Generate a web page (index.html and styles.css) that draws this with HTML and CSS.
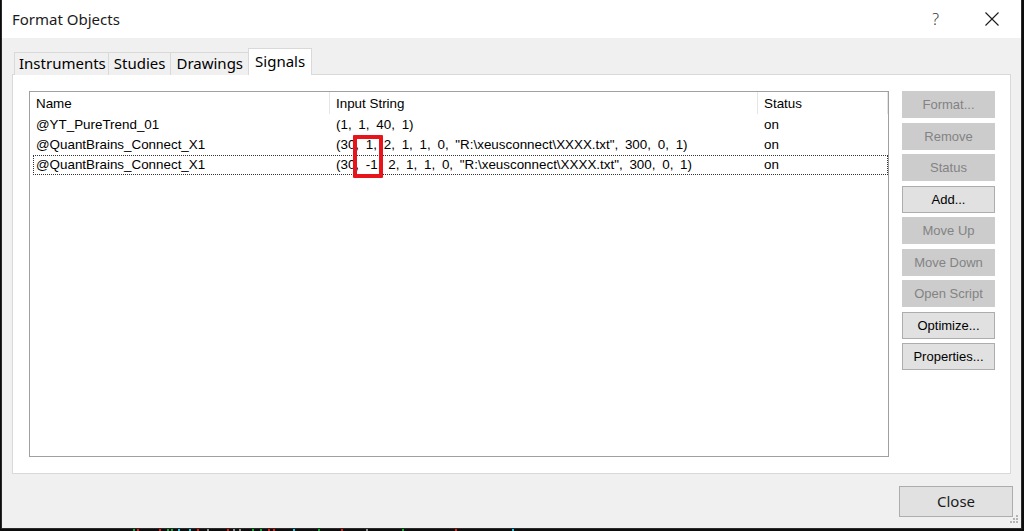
FILE: index.html
```html
<!DOCTYPE html>
<html lang="en">
<head>
<meta charset="utf-8">
<title>Format Objects</title>
<link rel="stylesheet" href="styles.css">
</head>
<body>
<div class="desk">
  <div class="dialog">
    <div class="titlebar">
      <span class="title">Format Objects</span>
      <div class="title-actions">
        <span class="help">?</span>
        <svg class="close-x" width="14" height="14" viewBox="0 0 14 14"><path d="M0.5 0.5 L13.5 13.5 M13.5 0.5 L0.5 13.5" stroke="#1a1a1a" stroke-width="1.1" fill="none"/></svg>
      </div>
    </div>
    <div class="main">
      <div class="tabs">
        <div class="tab first">Instruments</div>
        <div class="tab">Studies</div>
        <div class="tab">Drawings</div>
        <div class="tab active">Signals</div>
      </div>
      <div class="panel">
        <div class="list">
          <div class="list-head">
            <div class="hcell">Name</div>
            <div class="hcell">Input String</div>
            <div class="hcell">Status</div>
          </div>
          <div class="row">
            <div class="cell">@YT_PureTrend_01</div>
            <div class="cell args">(1,  1,  40,  1)</div>
            <div class="cell">on</div>
          </div>
          <div class="row">
            <div class="cell">@QuantBrains_Connect_X1</div>
            <div class="cell args">(30,  1,  2,  1,  1,  0,  "R:\xeusconnect\XXXX.txt",  300,  0,  1)</div>
            <div class="cell">on</div>
          </div>
          <div class="row focused">
            <div class="cell">@QuantBrains_Connect_X1</div>
            <div class="cell args">(30,  -1,  2,  1,  1,  0,  "R:\xeusconnect\XXXX.txt",  300,  0,  1)</div>
            <div class="cell">on</div>
          </div>
          <div class="mark"></div>
        </div>
        <div class="actions">
          <button class="btn" disabled>Format...</button>
          <button class="btn" disabled>Remove</button>
          <button class="btn" disabled>Status</button>
          <button class="btn">Add...</button>
          <button class="btn" disabled>Move Up</button>
          <button class="btn" disabled>Move Down</button>
          <button class="btn" disabled>Open Script</button>
          <button class="btn">Optimize...</button>
          <button class="btn">Properties...</button>
        </div>
      </div>
    </div>
    <div class="footer">
      <button class="close-btn">Close</button>
    </div>
    <svg class="grip" width="11" height="11" viewBox="0 0 11 11">
      <g fill="#b4b4b4">
        <rect x="8" y="0" width="2" height="2"/>
        <rect x="5" y="3" width="2" height="2"/><rect x="8" y="3" width="2" height="2"/>
        <rect x="2" y="6" width="2" height="2"/><rect x="5" y="6" width="2" height="2"/><rect x="8" y="6" width="2" height="2"/>
      </g>
    </svg>
  </div>
  <div class="chart-strip">
    <span class="tick up" style="left:133px"></span>
    <span class="tick dn" style="left:137px"></span>
    <span class="tick dn" style="left:159px"></span>
    <span class="tick up" style="left:167px"></span>
    <span class="tick up" style="left:171px"></span>
    <span class="tick cy" style="left:178px"></span>
    <span class="tick cy" style="left:189px"></span>
    <span class="tick dn" style="left:197px"></span>
    <span class="tick gr" style="left:207px"></span>
    <span class="tick dn" style="left:227px"></span>
    <span class="tick gr" style="left:233px"></span>
    <span class="tick gr" style="left:239px"></span>
    <span class="tick up" style="left:252px"></span>
    <span class="tick up" style="left:260px"></span>
    <span class="tick dn" style="left:268px"></span>
    <span class="tick dn" style="left:273px"></span>
    <span class="tick cy" style="left:293px"></span>
    <span class="tick up" style="left:318px"></span>
    <span class="tick dn" style="left:341px"></span>
    <span class="tick gr" style="left:366px"></span>
    <span class="tick up" style="left:402px"></span>
    <span class="tick dn" style="left:455px"></span>
    <span class="tick cy" style="left:512px"></span>
  </div>
</div>
</body>
</html>
```
FILE: styles.css
```css
* { box-sizing: border-box; }

html, body {
  margin: 0;
  padding: 0;
  width: 1024px;
  height: 531px;
  overflow: hidden;
  background: #0c0c0c;
}

.desk {
  position: relative;
  width: 1024px;
  height: 531px;
  padding-left: 1px;
}

.dialog {
  position: relative;
  width: 1021px;
  height: 529px;
  border: 1px solid #2a2a2a;
  border-top: none;
  background: #f0f0f0;
  display: flex;
  flex-direction: column;
  font-family: "Noto Sans", "Liberation Sans", sans-serif;
  color: #000;
}

/* Title bar */
.titlebar {
  height: 38px;
  flex: none;
  background: #fff;
  display: flex;
  align-items: center;
  justify-content: space-between;
  padding: 0 22px 0 10px;
}
.title {
  font-size: 15px;
  color: #1b1b1b;
  margin-top: -1px;
}
.title-actions {
  display: flex;
  align-items: center;
  gap: 46px;
  margin-top: -1px;
}
.help {
  font-size: 16px;
  font-weight: 300;
  color: #333;
}
.close-x { display: block; }

/* Tabs + panel */
.main {
  padding: 11px 10px 0 10px;
  flex: none;
}
.tabs {
  display: flex;
  align-items: flex-end;
  height: 25px;
  padding-left: 2px;
  position: relative;
  z-index: 1;
}
.tab {
  height: 23px;
  margin-bottom: -1px;
  border: 1px solid #d9d9d9;
  border-bottom: none;
  margin-left: -1px;
  background: #f0f0f0;
  font-size: 15px;
  line-height: 20px;
  padding: 0 5px 0 5px;
  color: #000;
  white-space: nowrap;
}
.tab.first {
  margin-left: 0;
  padding: 0 2px 0 4px;
}
.tab.active {
  height: 27px;
  background: #fff;
  padding: 0 6px 0 6px;
  line-height: 24px;
  margin-left: -1px;
}

.panel {
  height: 400px;
  border: 1px solid #d9d9d9;
  background: #fff;
  display: flex;
  align-items: flex-start;
  padding: 16px 15px 16px 16px;
  gap: 13px;
}

/* List view */
.list {
  position: relative;
  width: 860px;
  height: 366px;
  border: 1px solid #a0a0a0;
  background: #fff;
  font-family: "Liberation Sans", Arial, sans-serif;
  font-size: 13.4px;
  color: #000;
  flex: none;
}
.list-head,
.row {
  display: grid;
  grid-template-columns: 300px 428px 1fr;
}
.list-head { height: 23px; }
.hcell {
  padding-left: 6px;
  line-height: 23px;
  border-right: 1px solid #e5e5e5;
  height: 22px;
}
.row {
  position: relative;
  height: 20px;
}
.cell {
  padding-left: 6px;
  line-height: 20px;
  white-space: pre;
  overflow: hidden;
}
.cell.args { word-spacing: -0.35px; }
.row.focused::after {
  content: "";
  position: absolute;
  left: 3px;
  right: 0;
  top: 0;
  bottom: 0;
  border: 1px dotted #333;
}

/* Highlight box drawn over the changed parameter */
.mark {
  position: absolute;
  left: 323px;
  top: 43px;
  width: 30px;
  height: 43px;
  border: 4px solid #e8141c;
  border-radius: 1px;
}

/* Side buttons */
.actions {
  display: flex;
  flex-direction: column;
  gap: 4.5px;
  width: 93px;
  flex: none;
}
.btn {
  height: 27px;
  width: 93px;
  margin: 0;
  padding: 0;
  font-family: "Liberation Sans", Arial, sans-serif;
  font-size: 13px;
  color: #000;
  background: #e1e1e1;
  border: 1px solid #adadad;
  border-radius: 0;
}
.btn:disabled {
  background: #cccccc;
  border-color: #cccccc;
  color: #838383;
}

/* Footer */
.footer {
  display: flex;
  justify-content: flex-end;
  padding: 12px 8px 0 0;
}
.close-btn {
  width: 114px;
  height: 31px;
  margin: 0;
  padding: 0 0 2px 0;
  font-family: "Noto Sans", "Liberation Sans", sans-serif;
  font-size: 15px;
  color: #1b1b1b;
  background: #e1e1e1;
  border: 1px solid #adadad;
  border-radius: 0;
}

.grip {
  position: absolute;
  right: 2px;
  bottom: 2px;
}

/* Chart visible behind the dialog */
.chart-strip {
  position: absolute;
  left: 0;
  right: 0;
  bottom: 0;
  height: 2px;
}
.tick {
  position: absolute;
  bottom: 0;
  width: 2px;
  height: 2px;
}
.tick.up { background: #11a83a; }
.tick.dn { background: #e41a1a; }
.tick.cy { background: #22c8d8; }
.tick.gr { background: #8c8c8c; }
```
